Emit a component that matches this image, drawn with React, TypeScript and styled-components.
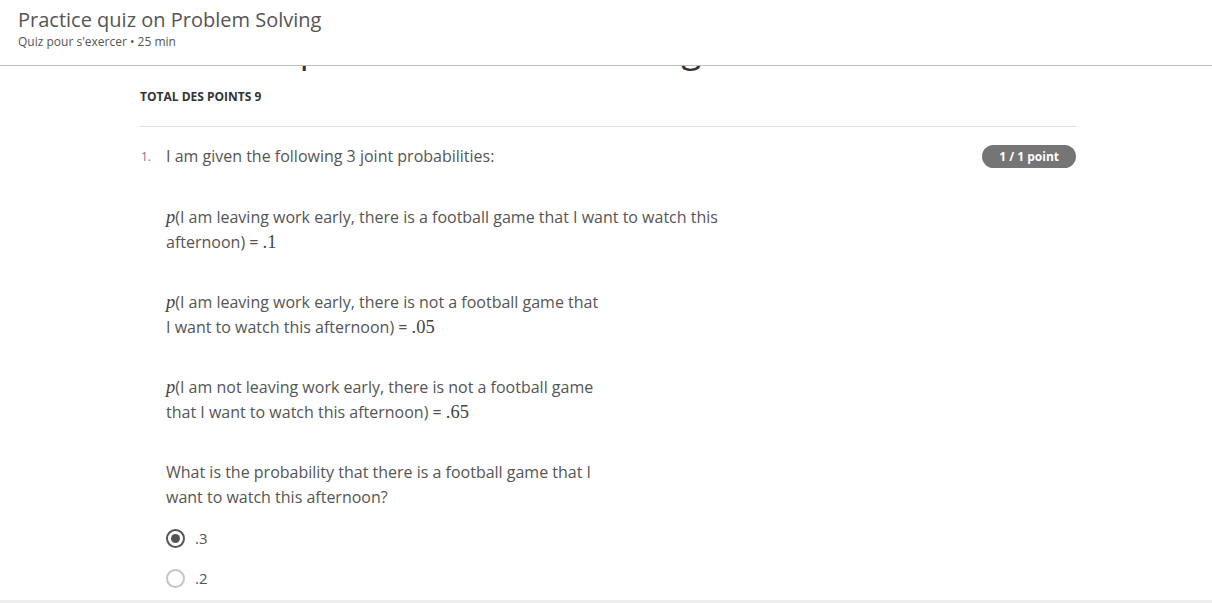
import React from "react";
import styled, { createGlobalStyle } from "styled-components";

const GlobalStyle = createGlobalStyle`
  html, body { margin: 0; padding: 0; background: #fff; }
  body { font-family: "Open Sans", "Noto Sans", sans-serif; color: #555; }
  * { box-sizing: border-box; }
`;

const Page = styled.div`
  position: relative;
  width: 1212px;
  height: 603px;
  overflow: hidden;
  background: #fff;
`;

const Header = styled.header`
  position: absolute;
  top: 0;
  left: 0;
  right: 0;
  height: 66px;
  background: #fff;
  border-bottom: 1px solid #bdbdbd;
  padding: 6px 18px 0;
  z-index: 2;
`;

const HeaderTitle = styled.div`
  font-size: 20px;
  line-height: 28px;
  color: #555;
`;

const HeaderSub = styled.div`
  font-size: 12px;
  line-height: 16px;
  color: #555;
`;

const Main = styled.main`
  width: 936px;
  margin-left: 140px;
`;

const BigTitle = styled.h1`
  margin: 22px 0 0;
  font-size: 37px;
  font-weight: 400;
  line-height: 52px;
  color: #333;
`;

const TotalPoints = styled.div`
  margin-top: 15px;
  font-size: 12px;
  font-weight: 700;
  line-height: 16px;
  color: #333;
  text-transform: uppercase;
`;

const Divider = styled.hr`
  margin: 21px 0 0;
  border: 0;
  border-top: 1px solid #e0e0e0;
`;

const QuestionRow = styled.div`
  display: flex;
  align-items: flex-start;
  padding-top: 17px;
`;

const Number = styled.div`
  width: 26px;
  padding-left: 1px;
  font-size: 12px;
  line-height: 25px;
  color: #777;
`;

const Body = styled.div`
  flex: 1;
`;

const Prompt = styled.div`
  font-size: 16px;
  line-height: 25px;
  color: #555;
`;

const Para = styled.p<{ $gap: number }>`
  margin: ${(p) => p.$gap}px 0 0;
  font-size: 16px;
  line-height: 25px;
  color: #555;
`;

const Math = styled.span<{ $italic?: boolean }>`
  font-family: "Liberation Serif", "DejaVu Serif", serif;
  font-style: ${(p) => (p.$italic ? "italic" : "normal")};
  font-size: 18.5px;
  color: #444;
`;

const Badge = styled.div`
  flex: none;
  margin-top: 1px;
  height: 23px;
  padding: 0 17px;
  border-radius: 12px;
  background: #757575;
  color: #fff;
  font-size: 12px;
  font-weight: 700;
  line-height: 23px;
`;

const Options = styled.div`
  margin-top: 16px;
  display: flex;
  flex-direction: column;
  gap: 16px;
`;

const Option = styled.label`
  display: flex;
  align-items: center;
  gap: 10px;
  height: 24px;
  font-size: 15px;
  color: #555;
`;

const Radio = styled.span<{ $checked?: boolean }>`
  display: inline-flex;
  align-items: center;
  justify-content: center;
  width: 19px;
  height: 19px;
  border-radius: 50%;
  border: ${(p) => (p.$checked ? "2.5px solid #555" : "2px solid #c4c4c4")};
  &::after {
    content: "";
    width: 9px;
    height: 9px;
    border-radius: 50%;
    background: ${(p) => (p.$checked ? "#555" : "transparent")};
  }
`;

const Footer = styled.div`
  position: absolute;
  left: 0;
  right: 0;
  bottom: 0;
  height: 3px;
  background: #eee;
`;

export default function App() {
  return (
    <>
      <GlobalStyle />
      <Page>
        <Header>
          <HeaderTitle>Practice quiz on Problem Solving</HeaderTitle>
          <HeaderSub>Quiz pour s'exercer • 25 min</HeaderSub>
        </Header>
        <Main>
          <BigTitle>Practice quiz on Problem Solving</BigTitle>
          <TotalPoints>Total des points 9</TotalPoints>
          <Divider />
          <QuestionRow>
            <Number>1.</Number>
            <Body>
              <Prompt>I am given the following 3 joint probabilities:</Prompt>
              <Para $gap={36}>
                <Math $italic>p</Math>(I am leaving work early, there is a football game that I want to watch this
                <br />
                afternoon) = <Math>.1</Math>
              </Para>
              <Para $gap={35}>
                <Math $italic>p</Math>(I am leaving work early, there is not a football game that
                <br />I want to watch this afternoon) = <Math>.05</Math>
              </Para>
              <Para $gap={35}>
                <Math $italic>p</Math>(I am not leaving work early, there is not a football game
                <br />
                that I want to watch this afternoon) = <Math>.65</Math>
              </Para>
              <Para $gap={35}>
                What is the probability that there is a football game that I
                <br />
                want to watch this afternoon?
              </Para>
              <Options>
                <Option>
                  <Radio $checked />
                  .3
                </Option>
                <Option>
                  <Radio />
                  .2
                </Option>
              </Options>
            </Body>
            <Badge>1 / 1 point</Badge>
          </QuestionRow>
        </Main>
        <Footer />
      </Page>
    </>
  );
}
